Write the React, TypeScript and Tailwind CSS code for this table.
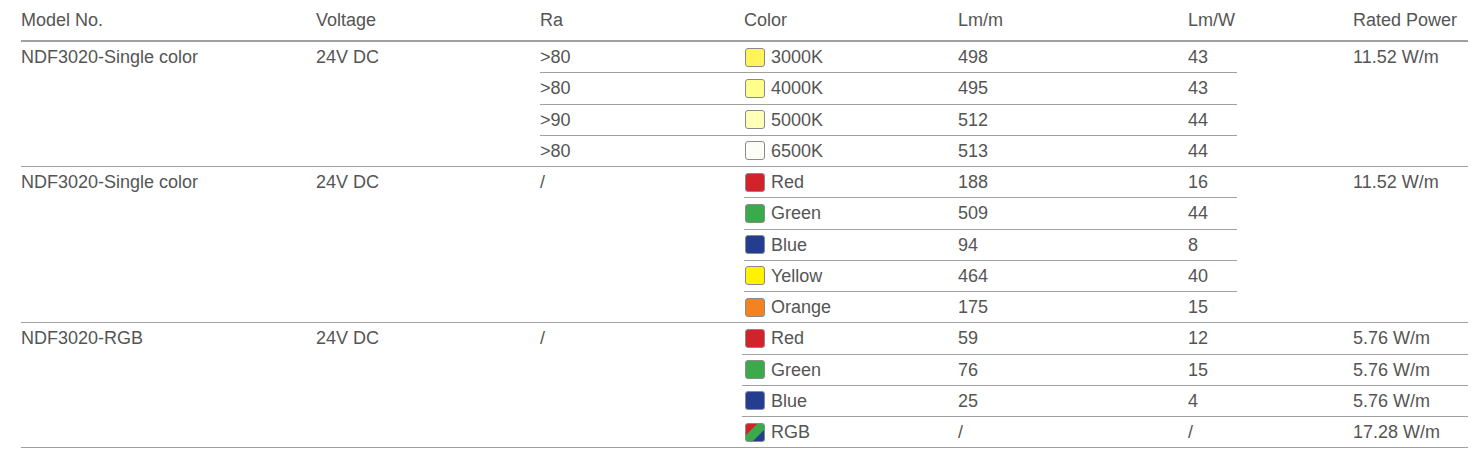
import React from "react";

type Sub = { ra?: string; color: string; name: string; lmm: string; lmw: string; power?: string };

const FONT = { fontFamily: '"Liberation Sans", Arial, sans-serif' };

function Swatch({ color }: { color: string }) {
  if (color === "rgb") {
    return (
      <svg width="20" height="19" viewBox="0 0 20 19" className="shrink-0">
        <defs>
          <clipPath id="rgbclip">
            <rect x="0.5" y="0.5" width="19" height="18" rx="2.5" />
          </clipPath>
        </defs>
        <g clipPath="url(#rgbclip)">
          <rect x="0" y="0" width="20" height="19" fill="#3aaa4a" />
          <polygon points="0,0 13,0 0,13" fill="#d2232a" />
          <polygon points="20,6 20,19 7,19" fill="#243e8f" />
        </g>
        <rect x="0.5" y="0.5" width="19" height="18" rx="2.5" fill="none" stroke="#8a8a8a" strokeWidth="1" />
      </svg>
    );
  }
  return (
    <span
      className="inline-block w-[20px] h-[19px] rounded-[3px] border border-[#8a8a8a] shrink-0"
      style={{ backgroundColor: color }}
    />
  );
}

function ColorCell({ color, name }: { color: string; name: string }) {
  return (
    <div className="w-[214px] flex items-center gap-[6px] pl-[1px]">
      <Swatch color={color} />
      <span>{name}</span>
    </div>
  );
}

const g1: Sub[] = [
  { ra: ">80", color: "#fff55a", name: "3000K", lmm: "498", lmw: "43" },
  { ra: ">80", color: "#ffff8c", name: "4000K", lmm: "495", lmw: "43" },
  { ra: ">90", color: "#ffffb8", name: "5000K", lmm: "512", lmw: "44" },
  { ra: ">80", color: "#fdfdf8", name: "6500K", lmm: "513", lmw: "44" },
];

const g2: Sub[] = [
  { color: "#d2232a", name: "Red", lmm: "188", lmw: "16" },
  { color: "#3aaa4a", name: "Green", lmm: "509", lmw: "44" },
  { color: "#243e8f", name: "Blue", lmm: "94", lmw: "8" },
  { color: "#fff200", name: "Yellow", lmm: "464", lmw: "40" },
  { color: "#f58220", name: "Orange", lmm: "175", lmw: "15" },
];

const g3: Sub[] = [
  { color: "#d2232a", name: "Red", lmm: "59", lmw: "12", power: "5.76 W/m" },
  { color: "#3aaa4a", name: "Green", lmm: "76", lmw: "15", power: "5.76 W/m" },
  { color: "#243e8f", name: "Blue", lmm: "25", lmw: "4", power: "5.76 W/m" },
  { color: "rgb", name: "RGB", lmm: "/", lmw: "/", power: "17.28 W/m" },
];

function rowCls(i: number, n: number) {
  return i < n - 1
    ? "flex items-center h-[31.25px] border-b border-[#a0a0a0]"
    : "flex items-center h-[30.25px]";
}

export default function App() {
  return (
    <div className="w-[1481px] h-[465px] bg-white text-[#555555] text-[18px] leading-none" style={FONT}>
      <div className="ml-[21px] w-[1447px]">
        {/* header */}
        <div className="flex items-center h-[42px] border-b-2 border-[#a0a0a0]">
          <div className="w-[295px]">Model No.</div>
          <div className="w-[224px]">Voltage</div>
          <div className="w-[204px]">Ra</div>
          <div className="w-[214px]">Color</div>
          <div className="w-[230px]">Lm/m</div>
          <div className="w-[49px]">Lm/W</div>
          <div className="w-[231px] pl-[116px]">Rated Power</div>
        </div>

        {/* group 1 */}
        <div className="flex border-b border-[#a0a0a0]">
          <div className="w-[295px] h-[30.25px] flex items-center">NDF3020-Single color</div>
          <div className="w-[224px] h-[30.25px] flex items-center">24V DC</div>
          <div className="w-[697px] flex flex-col">
            {g1.map((r, i) => (
              <div key={i} className={rowCls(i, g1.length)}>
                <div className="w-[204px]">{r.ra}</div>
                <ColorCell color={r.color} name={r.name} />
                <div className="w-[230px]">{r.lmm}</div>
                <div className="w-[49px]">{r.lmw}</div>
              </div>
            ))}
          </div>
          <div className="w-[231px] pl-[116px] h-[30.25px] flex items-center">11.52 W/m</div>
        </div>

        {/* group 2 */}
        <div className="flex border-b border-[#a0a0a0]">
          <div className="w-[295px] h-[30.25px] flex items-center">NDF3020-Single color</div>
          <div className="w-[224px] h-[30.25px] flex items-center">24V DC</div>
          <div className="w-[204px] h-[30.25px] flex items-center">/</div>
          <div className="w-[493px] flex flex-col">
            {g2.map((r, i) => (
              <div key={i} className={rowCls(i, g2.length)}>
                <ColorCell color={r.color} name={r.name} />
                <div className="w-[230px]">{r.lmm}</div>
                <div className="w-[49px]">{r.lmw}</div>
              </div>
            ))}
          </div>
          <div className="w-[231px] pl-[116px] h-[30.25px] flex items-center">11.52 W/m</div>
        </div>

        {/* group 3 */}
        <div className="flex border-b border-[#a0a0a0]">
          <div className="w-[295px] h-[30.25px] flex items-center">NDF3020-RGB</div>
          <div className="w-[224px] h-[30.25px] flex items-center">24V DC</div>
          <div className="w-[202px] h-[30.25px] flex items-center">/</div>
          <div className="w-[726px] flex flex-col">
            {g3.map((r, i) => (
              <div key={i} className={rowCls(i, g3.length)}>
                <div className="pl-[2px] flex">
                  <ColorCell color={r.color} name={r.name} />
                </div>
                <div className="w-[230px]">{r.lmm}</div>
                <div className="w-[49px]">{r.lmw}</div>
                <div className="w-[231px] pl-[116px]">{r.power}</div>
              </div>
            ))}
          </div>
        </div>
      </div>
    </div>
  );
}
